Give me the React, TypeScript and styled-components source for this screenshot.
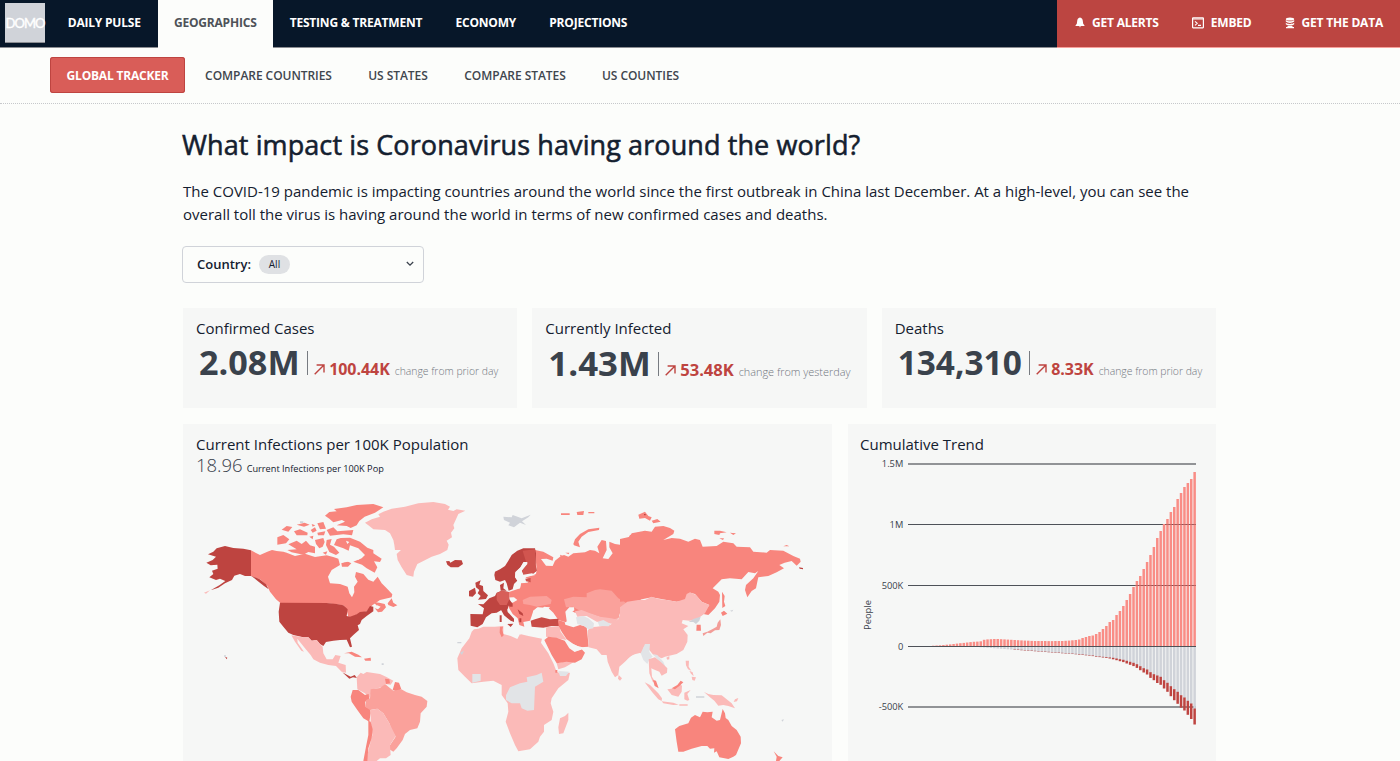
import React from 'react';
import styled, { createGlobalStyle } from 'styled-components';

const color = {
  page: '#fcfdfb',
  card: '#f6f7f6',
  navy: '#071729',
  text: '#14202f',
  slate: '#3a424c',
  grey: '#d0d3d9',
  red: '#be4440',
  warm: '#d95d58',
  coral: '#f8857d',
  salmon: '#faa19b',
  pink: '#fbbab8',
};

const GlobalStyle = createGlobalStyle`
  * { box-sizing: border-box; }
  html, body { margin: 0; background: ${color.page}; }
  body { font-family: 'Open Sans', sans-serif; color: ${color.text}; overflow: hidden; }
`;

const Page = styled.div`
  height: 761px;
  overflow: hidden;
  display: flex;
  flex-direction: column;
`;

const Header = styled.header`
  height: 47px;
  flex: none;
  display: flex;
  background: ${color.navy};
  box-shadow: 0 1px 0 #8b8d92;
`;

const Logo = styled.div`
  width: 40px;
  height: 40px;
  margin: 3px 6px 0 5px;
  background: ${color.grey};
  border-bottom: 1px solid #8b8d92;
  color: #fff;
  display: flex;
  align-items: center;
  justify-content: center;
  font-family: Lato, sans-serif;
  font-size: 13px;
  letter-spacing: -1px;
  -webkit-text-stroke: 0.4px #fff;
`;

const Tab = styled.a<{ $w: number; $active?: boolean }>`
  width: ${p => p.$w}px;
  height: ${p => (p.$active ? 48 : 47)}px;
  line-height: 45px;
  text-align: center;
  white-space: nowrap;
  font-size: 12px;
  font-weight: 700;
  letter-spacing: -0.2px;
  color: ${p => (p.$active ? '#4e5258' : '#fff')};
  background: ${p => (p.$active ? color.page : 'transparent')};
`;

const Actions = styled.div`
  width: 343px;
  height: 47px;
  margin-left: auto;
  padding: 0 17px 2px 18px;
  display: flex;
  align-items: center;
  justify-content: space-between;
  background: #bc4541;
  box-shadow: 0 1px 0 #f8a09b;
`;

const Action = styled.a`
  display: flex;
  align-items: center;
  gap: 7px;
  color: #fff;
  font-size: 12px;
  font-weight: 700;
  letter-spacing: -0.2px;
  white-space: nowrap;
  svg { display: block; }
`;

const SubNav = styled.nav`
  height: 57px;
  flex: none;
  padding: 10px 0 0 50px;
  display: flex;
  border-bottom: 1px dotted #c6c8cb;
`;

const SubTab = styled.a<{ $w: number; $active?: boolean }>`
  width: ${p => p.$w}px;
  height: 36px;
  line-height: 37px;
  border-radius: 3px;
  text-align: center;
  white-space: nowrap;
  font-size: 12px;
  font-weight: ${p => (p.$active ? 700 : 600)};
  letter-spacing: ${p => (p.$active ? '-0.2px' : '-0.05px')};
  color: ${p => (p.$active ? '#fff' : '#40464e')};
  background: ${p => (p.$active ? color.warm : 'transparent')};
  box-shadow: ${p => (p.$active ? `inset 0 0 0 1px ${color.red}` : 'none')};
`;

const Main = styled.main`
  width: 1034px;
  margin-left: 182px;
`;

const Title = styled.h1`
  margin: 22px 0 0;
  font-size: 27px;
  line-height: 38px;
  font-weight: 400;
  letter-spacing: 0.1px;
  -webkit-text-stroke: 0.55px ${color.text};
  white-space: nowrap;
`;

const Intro = styled.p`
  margin: 16px 0 0 1px;
  font-size: 15px;
  line-height: 23px;
  white-space: nowrap;
`;

const Select = styled.div`
  width: 242px;
  height: 37px;
  margin-top: 20px;
  padding: 0 8px 1px 14px;
  display: flex;
  align-items: center;
  border: 1px solid ${color.grey};
  border-radius: 4px;
  font-size: 13px;
  font-weight: 600;
  svg { margin-left: auto; }
`;

const Pill = styled.span`
  width: 31px;
  height: 19px;
  margin-left: 8px;
  border-radius: 10px;
  background: #dfe1e4;
  font-size: 10px;
  line-height: 19px;
  font-weight: 400;
  text-align: center;
`;

const Stats = styled.section`
  margin: 25px 0 0 1px;
  display: grid;
  grid-template-columns: repeat(3, 1fr);
  gap: 15px;
`;

const StatCard = styled.article`
  height: 100px;
  padding: 9px 0 0 13px;
  background: ${color.card};
`;

const CardTitle = styled.h2`
  margin: 0;
  font-size: 15px;
  line-height: 22px;
  font-weight: 400;
  white-space: nowrap;
`;

const Figures = styled.div<{ $top: number }>`
  display: flex;
  align-items: baseline;
  height: 46px;
  margin-top: ${p => p.$top}px;
  padding-left: 3px;
  white-space: nowrap;
`;

const Big = styled.span<{ $size: number }>`
  font-size: ${p => p.$size}px;
  line-height: 46px;
  font-weight: 700;
  color: ${color.slate};
`;

const Divider = styled.span`
  width: 1px;
  height: 24px;
  margin: 0 6px 0 7.5px;
  background: #777b81;
`;

const Delta = styled.span<{ $size: number }>`
  margin-left: 4px;
  font-size: ${p => p.$size}px;
  font-weight: 700;
  letter-spacing: -0.05px;
  color: ${color.red};
`;

const Note = styled.span<{ $size: number }>`
  margin-left: 5px;
  font-size: ${p => p.$size}px;
  font-weight: 300;
  color: #71767e;
`;

const Panels = styled.section`
  margin: 16px 0 0 1px;
  display: grid;
  grid-template-columns: 649px 368px;
  gap: 16px;
`;

const Panel = styled.article<{ $inset: number }>`
  height: 337px;
  padding-top: 9px;
  background: ${color.card};
  overflow: hidden;
  > h2, > div { padding-left: ${p => p.$inset}px; }
`;

const Summary = styled.div`
  height: 23px;
  display: flex;
  align-items: baseline;
  gap: 4px;
  line-height: 20px;
  font-size: 9.2px;
  color: ${color.text};
  b { font-size: 18.5px; font-weight: 300; color: ${color.slate}; }
`;

const MapSvg = styled.svg`
  display: block;
  width: 649px;
  height: 283px;
`;

const ChartSvg = styled.svg`
  display: block;
  width: 368px;
  height: 306px;
  text { font-family: 'Open Sans', sans-serif; font-size: 9.3px; fill: ${color.slate}; }
`;

type Shape = [fill: string, d: string];

// Land outlines, grouped by region; each region has its own origin and a 3:1 grid.
const americas: Shape[] = [
  [color.coral, 'M213 391L240 405L262 395L276 390L290 393L310 395L320 398L345 408L375 401L405 411L440 406L462 412L475 416L480 435L455 450L444 470L450 490L480 492L503 500L508 520L516 532L523 517L522 500L533 485L525 470L528 456L550 462L565 479L580 485L593 470L605 490L620 505L637 523L635 532L600 540L577 556L560 574L540 580L506 595L500 570L490 556L440 550L302 550L288 538L270 515L262 498L240 478L213 468Z'],
  [color.coral, 'M462 375L470 358L482 354L510 353L540 365L562 383L580 390L580 400L605 416L600 426L582 424L592 442L584 458L560 445L546 434L520 425L545 415L555 405L535 385L510 376L506 392L490 385ZM325 373L350 362L365 372L378 362L390 376L405 380L405 400L385 396L370 404L335 397L322 390L350 388ZM292 352L310 345L328 358L318 370L292 374ZM435 287L448 276L470 274L462 267L500 262L530 255L580 252L610 262L585 278L554 290L538 303L530 316L512 324L500 318L470 316L495 305L486 300L460 307L448 296ZM440 330L460 322L472 334L520 330L516 346L490 343L450 347ZM305 329L320 318L337 321L325 335ZM342 334L360 328L383 338L382 346L350 346ZM350 314L374 308L389 314L372 320ZM392 330L405 322L410 332L398 338ZM388 350L400 347L398 358ZM395 312L406 316L398 320ZM405 360L430 354L434 366L428 380L418 385L408 372ZM440 360L455 357L450 374L462 380L478 398L468 405L448 396L438 375ZM412 310L430 306L438 326L420 328ZM412 338L436 334L432 346L414 346ZM428 398L442 394L438 404ZM484 430L500 423L514 430L504 440L486 440ZM580 546L598 548L614 552L618 562L606 575L594 577L582 562L595 562ZM623 550L635 535L640 548L652 556L640 561L625 555Z'],
  [color.card, 'M478 415L495 420L510 412L520 418L512 424L486 428ZM528 408L540 402L546 412L534 420ZM592 556L602 560L594 568L580 563ZM498 362L508 366L502 372Z'],
  [color.red, 'M213 391L213 468L195 468L180 462L163 467L156 480L135 490L115 503L92 511L118 496L136 483L120 476L108 480L88 472L100 462L96 452L113 446L112 434L92 436L79 428L98 420L108 410L84 403L100 395L110 385L135 378L160 384L190 386ZM213 467L238 477L258 493L266 508L252 498L232 482ZM135 710L142 713L140 718Z'],
  [color.red, 'M300 548L440 549L470 552L490 556L503 568L500 588L510 590L530 583L540 576L560 574L570 558L580 560L580 574L560 588L545 600L540 612L533 616L537 630L520 645L510 655L516 680L510 682L500 659L480 660L460 662L438 666L430 678L420 672L410 660L395 662L385 652L370 652L340 645L325 638L310 620L298 605L296 575Z'],
  [color.pink, 'M334 646L368 652L385 652L395 662L410 660L420 672L428 680L430 700L440 718L458 718L466 705L482 708L475 728L497 735L498 758L485 755L468 738L445 735L420 728L400 718L392 705L375 685L352 656L353 668L372 695L364 692L345 665ZM72 518L90 511L78 521Z'],
  [color.red, 'M487 757L502 765L512 770L524 765L531 774L519 772L508 776Z'],
  [color.coral, 'M492 700L515 695L535 704L546 712L525 710L507 700ZM552 716L572 713L573 722L556 722Z'],
  [color.grey, 'M132 706h6v4h-6ZM605 730h6v5h-6ZM360 304h10v5h-10Z'],
];

const atlantic: Shape[] = [
  [color.pink, 'M105 128L125 118L150 110L145 103L160 95L185 86L225 80L265 70L310 66L345 72L360 80L354 89L370 93L380 88L406 92L385 102L378 118L370 135L373 145L363 158L366 172L350 182L356 194L352 210L330 222L305 230L280 243L262 252L252 275L250 290L230 285L215 262L203 240L200 222L213 210L195 210L193 195L190 180L180 160L165 150L130 148L118 138Z'],
  [color.red, 'M348 244L358 243L361 248L375 240L395 241L399 252L385 262L362 262L352 254Z'],
  [color.pink, 'M80 592L92 578L100 582L110 576L150 582L168 590L190 602L182 614L165 612L155 622L128 628L118 655L105 640L82 628Z'],
  [color.coral, 'M68 630L85 630L105 645L116 642L118 660L105 665L105 680L121 685L122 700L118 725L100 715L82 690L65 665L62 650ZM165 596L178 598L180 610L168 612ZM195 606L207 608L214 628L200 634L188 630Z'],
  [color.salmon, 'M122 628L150 624L165 612L190 632L214 628L230 637L255 645L275 650L292 663L290 680L272 700L270 725L262 745L240 750L225 762L218 780L200 805L190 815L178 808L180 796L197 770L185 750L178 730L160 700L142 686L120 690L105 680L108 660L120 655Z'],
  [color.pink, 'M122 690L142 686L160 700L178 730L188 750L197 768L180 795L182 825L168 835L150 835L140 843L108 843L118 800L127 765L122 725Z'],
  [color.coral, 'M115 722L122 725L128 748L125 775L115 805L112 843L100 843L108 800L115 765Z'],
];

const euroAfrica: Shape[] = [
  [color.coral, 'M285 180L310 185L340 202L338 212L320 206L303 207L318 227L338 228L345 212L360 200L372 195L385 200L400 190L435 187L450 180L465 182L478 190L472 170L485 150L498 153L500 180L488 205L505 207L518 190L508 172L508 155L525 162L545 165L540 149L560 153L570 135L602 126L602 330L570 345L540 365L535 385L505 390L480 380L450 370L425 362L405 368L385 358L378 365L385 385L378 397L355 390L340 368L325 354L295 352L280 362L275 378L270 392L250 396L253 410L238 405L233 385L218 372L205 350L208 328L207 306L240 295L243 280L262 278L272 270L256 262L288 252L290 240Z'],
  [color.coral, 'M400 162L405 148L420 132L445 118L478 113L477 120L445 126L425 140L415 155L420 172L402 166ZM363 70h26v5h-26ZM410 66L432 63L430 75L412 75ZM445 66h18v4h-18ZM360 194l10 4l-8 4ZM376 188l12 0l-2 5Z'],
  [color.salmon, 'M372 328L400 320L440 322L440 310L465 300L480 298L515 302L535 325L550 332L565 345L540 365L535 385L505 388L470 378L420 362L398 350L378 352ZM248 330L270 320L320 318L335 330L332 342L290 350L270 345L250 342Z'],
  [color.card, 'M278 382L280 362L292 352L306 358L312 350L330 352L322 361L345 378L330 388L300 380ZM376 365L388 352L402 352L403 361L392 368L397 388L407 395L408 408L392 410L380 392ZM200 323L222 322L232 330L218 338L202 334Z'],
  [color.red, 'M163 255L165 245L180 238L195 228L205 212L215 195L232 182L250 175L285 175L288 190L287 225L290 242L275 255L250 255L245 242L262 222L250 216L242 232L226 248L225 262L232 272L222 282L218 298L206 302L200 280L195 270L180 275L166 270Z'],
  ['#d1554f', 'M248 182L285 178L287 225L290 242L272 256L250 255L245 242L260 222Z'],
  [color.card, 'M245 242L262 222L262 216L252 216L240 233L226 246L226 262L233 272L224 282L220 298L240 295L243 278L255 262L286 255L276 250L250 254Z'],
  ['#d1554f', 'M256 266l16-2v13l-14-3Z'],
  [color.red, 'M180 285L192 278L190 295L200 302L182 302ZM106 278L122 271L118 284L129 288L130 303L144 316L138 327L114 329L122 318L113 310L118 300L108 292ZM87 303L105 293L108 310L98 320L87 319Z'],
  [color.red, 'M114 342L130 343L148 325L165 318L170 308L185 302L205 306L208 328L218 342L205 348L203 358L188 358L170 368L155 370L138 382L128 402L112 412L92 407L91 372L128 373L132 355ZM182 358L200 350L203 366L222 386L222 396L212 392L192 376ZM202 402L220 401L212 411ZM179 376h6v20h-6ZM233 358L248 370L250 378L238 372ZM238 385h6v12h-6ZM208 340h10v10h-10Z'],
  ['#d75f59', 'M170 310L185 302L207 306L208 328L200 345L180 345L170 330Z'],
  ['#c94c47', 'M272 392L285 388L305 382L330 388L355 386L358 408L335 408L310 413L275 410Z'],
  [color.pink, 'M405 364L425 360L450 370L480 380L535 388L520 402L470 395L440 378L412 380ZM318 412L358 408L362 425L380 450L350 445L318 440ZM350 520L385 512L402 516L375 532L355 538Z'],
  [color.coral, 'M354 390L374 396L376 404L400 412L420 405L440 410L446 470L420 472L400 462L380 448L365 425L356 408ZM313 450L325 440L350 443L374 452L388 475L404 486L425 478L435 488L425 508L405 518L380 515L350 520L335 495Z'],
  [color.pink, 'M443 422L450 412L470 410L510 405L535 388L542 365L570 345L602 328L602 488L575 495L555 515L538 530L535 555L525 562L515 545L503 515L500 495L485 495L470 478L446 472ZM536 555L546 565L540 572L534 566Z'],
  ['#e2e4e7', 'M408 382L430 378L445 385L462 400L460 415L445 418L430 407L412 402ZM473 395L490 390L512 402L506 409L478 408Z'],
  [color.pink, 'M102 418L115 416L130 410L165 410L190 408L190 432L212 438L232 447L240 432L265 438L306 446L303 458L325 490L340 520L350 545L365 552L390 548L385 570L355 595L335 625L332 640L340 665L335 690L312 705L312 725L300 740L295 755L270 778L235 784L225 765L210 730L197 695L205 665L203 640L185 615L185 585L160 572L130 575L95 580L75 560L55 540L52 505L65 475L88 445L95 425ZM385 668L385 690L370 730L357 732L355 712L360 685L375 678Z'],
  ['#e2e4e7', 'M198 616L210 592L240 580L262 575L260 562L290 555L305 548L310 575L285 590L282 660L262 662L245 655L240 640L215 640L198 630ZM97 552L122 552L122 572L97 578ZM355 543L388 545L378 558L360 558Z'],
  [color.coral, 'M180 410L189 410L187 420L191 436L185 442L179 428ZM346 540l6 0l0 8l-6 0Z'],
  [color.grey, 'M190 80L215 82L218 75L245 85L272 74L265 82L246 94L258 105L240 98L222 112L205 106L210 98L192 90ZM60 488L72 482L66 495ZM52 456h12v4h-12Z'],
  [color.card, 'M238 420L250 428L240 434ZM378 448L390 458L412 468L428 472L424 479L404 484L392 474Z'],
];

const asiaPacific: Shape[] = [
  [color.coral, 'M0 147L30 140L35 130L75 122L95 125L105 110L130 108L150 114L163 122L160 132L130 150L155 144L180 146L205 155L225 146L240 150L248 170L290 168L310 155L340 160L350 170L390 172L400 185L440 188L450 180L490 182L520 198L540 206L542 215L530 227L515 213L494 218L478 225L492 235L470 247L445 258L415 262L412 275L408 295L395 303L382 322L375 300L378 285L400 265L415 243L405 250L385 246L365 268L330 265L305 268L278 295L295 305L300 315L298 335L285 355L265 375L250 372L268 345L245 335L225 312L210 308L200 330L170 335L140 330L95 322L55 330L0 335Z'],
  [color.pink, 'M0 352L22 335L55 330L75 330L95 320L115 327L140 330L170 335L195 327L200 312L210 307L228 315L245 335L268 345L255 370L235 385L210 392L188 390L185 400L205 408L190 418L203 435L202 455L190 480L170 492L135 500L125 505L100 495L88 480L72 470L65 490L50 488L30 500L0 522Z'],
  ['#e2e4e7', 'M62 490L75 462L90 462L88 485L98 500L88 508L82 522L70 510ZM98 492L112 495L130 515L138 535L125 522Z'],
  [color.grey, 'M206 396L222 386L242 380L238 392L228 402L220 396ZM228 619h25v4h-25ZM330 362l10-3l-4 6ZM484 690l8-2l-4 7Z'],
  [color.pink, 'M86 508L105 502L125 518L142 535L141 548L125 557L118 545L100 538L94 535L96 560L108 580L98 575L88 550ZM139 503L148 498L148 508L142 509ZM74 577L90 585L115 610L126 625L125 633L115 628L98 608ZM125 634L160 638L176 644L160 645L130 640ZM178 643h25v4h-25ZM142 598L165 595L180 580L186 588L185 605L175 620L155 615ZM193 608L212 600L202 612L208 630L202 632L193 628ZM197 512L207 512L206 530L214 542L204 538L198 526ZM215 560L228 562L224 572L217 570ZM208 542l10 5l3 12l-8-8ZM252 606L265 612L280 615L305 616L320 628L335 640L345 655L325 648L310 645L295 647L283 632L270 622ZM345 628l10 -4l-4 10l-10 2Z'],
  [color.coral, 'M99 570L108 572L116 595L104 588ZM155 595L172 585L182 572L190 577L178 588L165 598ZM230 404L242 404L243 422L229 422ZM303 368L312 362L322 371L308 378ZM306 305L314 318L312 335L316 348L307 354ZM283 122L300 122L320 127L300 130L298 135L283 132ZM330 128l18 2l-8 5ZM298 145l14 0l-3 5ZM490 169L500 165L508 169ZM55 74L75 65L85 78L95 82L90 92L75 84L58 86ZM95 92L112 87L122 95L100 100Z'],
  ['#f39d98', 'M248 430L262 425L278 417L290 410L293 398L301 388L303 405L298 420L285 421L272 430L262 428L250 438Z'],
  [color.coral, 'M165 718L178 708L205 700L213 683L225 675L240 682L248 665L262 667L278 665L275 682L290 692L300 690L308 657L315 670L317 684L325 690L335 708L350 720L362 740L363 760L348 795L340 800L325 807L298 802L290 784L282 788L283 775L270 776L262 768L245 768L215 776L190 785L175 785L170 755ZM461 784L475 798L488 802L478 813L468 813L470 800Z'],
  [color.red, 'M537 232l12 2l0 4l-10-2ZM72 72h5v4h-5Z'],
];

const regions: { x: number; y: number; shapes: Shape[] }[] = [
  { x: 180, y: 420, shapes: americas },
  { x: 330, y: 480, shapes: atlantic },
  { x: 440, y: 490, shapes: euroAfrica },
  { x: 620, y: 490, shapes: asiaPacific },
];

const WorldMap = () => (
  <MapSvg viewBox="183 478 649 283">
    {regions.map(r => (
      <g key={`${r.x}-${r.y}`} transform={`translate(${r.x} ${r.y}) scale(0.33333)`}>
        {r.shapes.map(([fill, d], i) => (
          <path key={i} d={d} fill={fill} />
        ))}
      </g>
    ))}
  </MapSvg>
);

// Heights in chart pixels, one entry per day.
const infected = [
  0, 0, 0, 0, 0, 0, 0, 0.3, 0.5, 0.7, 1, 1.3, 1.6, 2, 2.4, 2.8, 3.1, 3.5, 3.9, 4.2, 4.4, 4.7, 6.2, 6.6, 6.8, 7, 7,
  6.8, 6.6, 6.4, 6.2, 6, 5.8, 5.6, 5.4, 5.3, 5.1, 5, 5, 5, 5, 4.9, 4.9, 5, 5, 5, 5.2, 5.4, 5.7, 6,
  6.5, 8, 9, 10, 10.5, 12, 14, 17, 20, 24, 26, 31, 35, 40, 46, 52, 59, 65, 70, 77, 84, 91, 99,
  108, 115, 122, 127, 134, 139, 147, 153, 159, 163, 167, 174,
];
const recoveredTail = [
  7.8, 8, 8.3, 8.7, 9, 9.5, 10, 10.3, 10.6, 11, 11.3, 12, 12.7, 13.3, 14.3, 15.3, 16.3, 17.7, 19.7, 21.7, 23,
  25.7, 27.7, 29, 30.3, 33.7, 36.3, 39.7, 42.7, 45.3, 48.7, 51, 54.3, 57, 62,
];
const deathsTail = [
  0.5, 0.5, 0.5, 0.5, 0.6, 0.6, 0.6, 0.7, 0.8, 1, 1.5, 1.7, 2, 2.3, 2.7, 3, 3.3, 3.7, 4, 4.3, 5, 5.7, 6,
  7.5, 8, 8.3, 9, 10, 11, 12, 12.5, 13, 14, 15.5, 16,
];
const tailStart = infected.length - recoveredTail.length;
const recovered = infected.map((_, i) =>
  i >= tailStart ? recoveredTail[i - tailStart] : i < 20 ? 0 : ((i - 20) / (tailStart - 20)) * 7.6,
);
const deaths = infected.map((_, i) => (i >= tailStart ? deathsTail[i - tailStart] : i > 30 ? 0.4 : 0));

const grid = [
  { label: '1.5M', y: 464, w: 2, c: '#919396' },
  { label: '1M', y: 524.5, w: 1, c: '#4e5258' },
  { label: '500K', y: 585.5, w: 1, c: '#4e5258' },
  { label: '0', y: 646.5, w: 1, c: '#4e5258' },
  { label: '-500K', y: 707, w: 2, c: '#919396' },
];

const TrendChart = () => (
  <ChartSvg viewBox="848 455 368 306">
    {grid.map(g => (
      <g key={g.label}>
        <text x="903.3" y={g.y + 3} textAnchor="end">{g.label}</text>
        <path d={`M908 ${g.y}H1196`} stroke={g.c} strokeWidth={g.w} />
      </g>
    ))}
    <text transform="translate(871 630) rotate(-90)" textLength="30">People</text>
    {infected.map((h, i) => {
      const x = 908.2 + i * 3.395;
      return (
        <g key={i}>
          <rect x={x} y={646 - h} width="2.5" height={h} fill="#f98d86" />
          <rect x={x} y="647" width="2.5" height={recovered[i]} fill={color.grey} />
          <rect x={x} y={646.5 + recovered[i]} width="2.5" height={deaths[i]} fill={color.red} />
        </g>
      );
    })}
    <path d="M908 646.5H1196" stroke="#4e5258" opacity="0.8" />
    <path d="M1165 524.5H1196M1136 585.5H1196" stroke="#9c4a4a" opacity="0.6" />
  </ChartSvg>
);

const BellIcon = () => (
  <svg width="10" height="11" viewBox="0 0 10 11" fill="#fff">
    <path d="M5 0.5C3.1 0.9 2.3 2.3 2.2 4L1.8 6.8L0.5 8.4V9H9.5V8.4L8.2 6.8L7.8 4C7.7 2.3 6.9 0.9 5 0.5ZM3.8 9.4H6.2C6 10.5 4 10.5 3.8 9.4Z" />
  </svg>
);

const EmbedIcon = () => (
  <svg width="12" height="12" viewBox="0 0 12 12" fill="none" stroke="#fff">
    <rect x="0.6" y="0.8" width="10.8" height="10" rx="0.5" strokeWidth="1.2" />
    <path d="M0.6 2H11.4M3 4.4L5.2 6.3L3 8.3M6 8.4H9" strokeWidth="1.1" />
  </svg>
);

const DataIcon = () => (
  <svg width="10" height="12" viewBox="0 0 10 12" fill="#fff">
    <ellipse cx="5" cy="2" rx="4.2" ry="1.6" />
    <path d="M0.8 3C2.5 4.7 7.5 4.7 9.2 3V4.6C7.5 6.3 2.5 6.3 0.8 4.6ZM0.8 5.7C2.5 7.3 7.5 7.3 9.2 5.7V7.2C7.5 8.9 2.5 8.9 0.8 7.2ZM2.5 9H7.5V10H9V11.3H1V10H2.5Z" />
  </svg>
);

const UpArrow = () => (
  <svg width="11" height="11" viewBox="0 0 11 11" fill="none" stroke={color.red} strokeWidth="1.4">
    <path d="M0.7 10.3L10 1M2.6 1H10V8.4" />
  </svg>
);

const tabs = [
  { label: 'DAILY PULSE', w: 106.5 },
  { label: 'GEOGRAPHICS', w: 115.5, active: true },
  { label: 'TESTING & TREATMENT', w: 166 },
  { label: 'ECONOMY', w: 93.5 },
  { label: 'PROJECTIONS', w: 111.5 },
];

const subTabs = [
  { label: 'GLOBAL TRACKER', w: 135, active: true },
  { label: 'COMPARE COUNTRIES', w: 167 },
  { label: 'US STATES', w: 92 },
  { label: 'COMPARE STATES', w: 142 },
  { label: 'US COUNTIES', w: 109 },
];

const stats = [
  { title: 'Confirmed Cases', value: '2.08M', size: 34.2, top: 0, delta: '100.44K', deltaSize: 16, note: 'change from prior day', noteSize: 10.4 },
  { title: 'Currently Infected', value: '1.43M', size: 34.8, top: 1, delta: '53.48K', deltaSize: 16.6, note: 'change from yesterday', noteSize: 10.9 },
  { title: 'Deaths', value: '134,310', size: 33.4, top: -0.5, delta: '8.33K', deltaSize: 16, note: 'change from prior day', noteSize: 10.4 },
];

export default function App() {
  return (
    <Page>
      <GlobalStyle />
      <Header>
        <Logo>DOMO</Logo>
        {tabs.map(t => (
          <Tab key={t.label} $w={t.w} $active={t.active}>{t.label}</Tab>
        ))}
        <Actions>
          <Action><BellIcon />GET ALERTS</Action>
          <Action><EmbedIcon />EMBED</Action>
          <Action><DataIcon />GET THE DATA</Action>
        </Actions>
      </Header>
      <SubNav>
        {subTabs.map(t => (
          <SubTab key={t.label} $w={t.w} $active={t.active}>{t.label}</SubTab>
        ))}
      </SubNav>
      <Main>
        <Title>What impact is Coronavirus having around the world?</Title>
        <Intro>
          The COVID-19 pandemic is impacting countries around the world since the first outbreak in China last December. At a high-level, you can see the
          <br />
          overall toll the virus is having around the world in terms of new confirmed cases and deaths.
        </Intro>
        <Select>
          Country:
          <Pill>All</Pill>
          <svg width="10" height="8" viewBox="0 0 10 8" fill="none" stroke={color.slate} strokeWidth="1.3">
            <path d="M1.8 2L5 5.2L8.2 2" />
          </svg>
        </Select>
        <Stats>
          {stats.map(s => (
            <StatCard key={s.title}>
              <CardTitle>{s.title}</CardTitle>
              <Figures $top={s.top}>
                <Big $size={s.size}>{s.value}</Big>
                <Divider />
                <UpArrow />
                <Delta $size={s.deltaSize}>{s.delta}</Delta>
                <Note $size={s.noteSize}>{s.note}</Note>
              </Figures>
            </StatCard>
          ))}
        </Stats>
        <Panels>
          <Panel $inset={13}>
            <CardTitle>Current Infections per 100K Population</CardTitle>
            <Summary><b>18.96</b>Current Infections per 100K Pop</Summary>
            <WorldMap />
          </Panel>
          <Panel $inset={12}>
            <CardTitle>Cumulative Trend</CardTitle>
            <TrendChart />
          </Panel>
        </Panels>
      </Main>
    </Page>
  );
}
